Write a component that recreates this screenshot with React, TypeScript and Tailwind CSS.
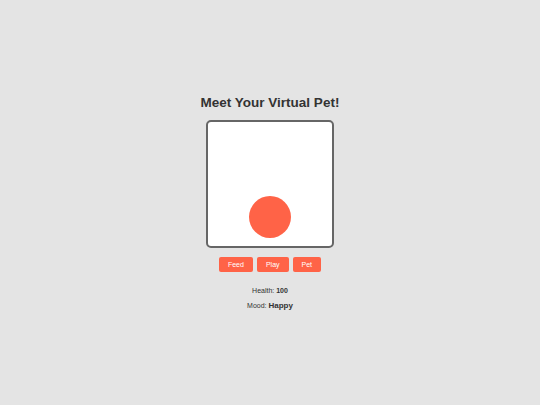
import { useState } from "react";

export default function App() {
  const [health, setHealth] = useState(100);
  const [mood, setMood] = useState("Happy");

  return (
    <div className="h-[405px] w-full bg-[#e4e4e4] flex flex-col items-center pt-[95px] font-['Liberation_Sans',Arial,sans-serif] text-[#333]">
      <h1 className="text-[13.5px] leading-[16px] font-bold mb-[9px]">Meet Your Virtual Pet!</h1>
      <div className="w-[128px] h-[128px] bg-white border-2 border-[#666] rounded-[5px] flex items-end justify-center pb-[8px]">
        <div className="w-[42px] h-[42px] rounded-full bg-[#ff6347]" />
      </div>
      <div className="flex gap-[4px] mt-[9px]">
        {["Feed", "Play", "Pet"].map((label) => (
          <button
            key={label}
            onClick={() => {
              if (label === "Feed") setHealth(Math.min(100, health + 10));
              else setMood("Happy");
            }}
            className="h-[15px] px-[9px] bg-[#ff6347] text-white text-[7px] leading-[15px] rounded-[2px]"
          >
            {label}
          </button>
        ))}
      </div>
      <p className="text-[7px] leading-[10px] mt-[14px]">
        Health: <span className="font-bold">{health}</span>
      </p>
      <p className="text-[7px] leading-[10px] mt-[5px]">
        Mood: <span className="font-bold text-[8px]">{mood}</span>
      </p>
    </div>
  );
}
